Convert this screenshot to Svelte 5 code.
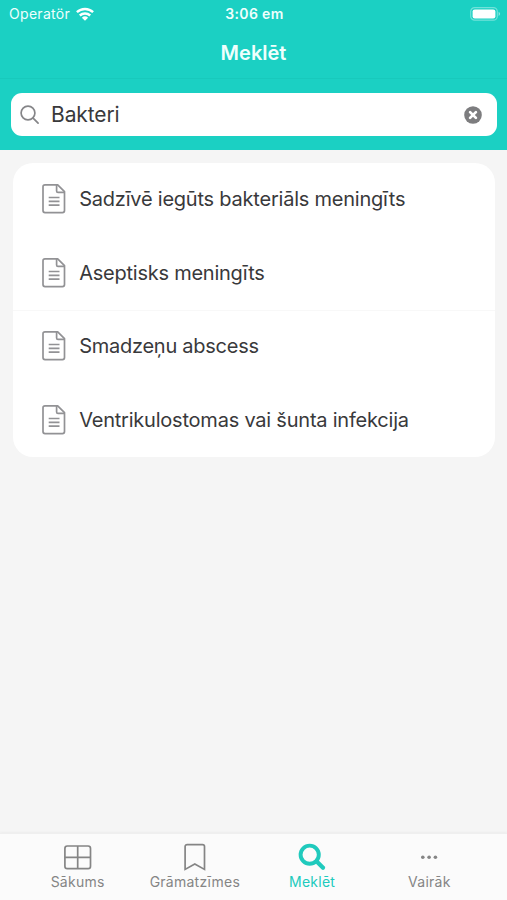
<script>
  const results = [
    { title: 'Sadzīvē iegūts bakteriāls meningīts', spacing: -0.22 },
    { title: 'Aseptisks meningīts', spacing: -0.24 },
    { title: 'Smadzeņu abscess', spacing: -0.26 },
    { title: 'Ventrikulostomas vai šunta infekcija', spacing: -0.22 }
  ];
  const tabs = [
    { id: 'home', label: 'Sākums' },
    { id: 'bookmarks', label: 'Grāmatzīmes' },
    { id: 'search', label: 'Meklēt' },
    { id: 'more', label: 'Vairāk' }
  ];
  const active = 'search';
</script>

<div class="screen">
  <header>
    <div class="status">
      <div class="carrier">
        <span>Operatör</span>
        <svg width="18" height="14" viewBox="0 0 18 14" fill="none" stroke="#fff" stroke-width="2.4">
          <path d="M.9 5.2a11.7 11.7 0 0 1 16.2 0" />
          <path d="M3.8 8.5a7.6 7.6 0 0 1 10.4 0" />
          <path d="M9 13.8 5.9 10.7a4.5 4.5 0 0 1 6.2 0z" fill="#fff" stroke="none" />
        </svg>
      </div>
      <span class="time">3:06 em</span>
      <svg class="battery" width="31" height="14" viewBox="0 0 31 14">
        <rect x="0.7" y="0.6" width="26.6" height="12.6" rx="4" fill="none" stroke="#fff" stroke-opacity=".38" stroke-width="1.2" />
        <rect x="2.6" y="2.4" width="22.8" height="9" rx="2.2" fill="#fff" />
        <path d="M28.6 4.8c2 .8 2 3.4 0 4.2z" fill="#fff" fill-opacity=".5" />
      </svg>
    </div>
    <h1>Meklēt</h1>
  </header>

  <div class="searchbar">
    <div class="field">
      <svg width="20" height="20" viewBox="0 0 20 20" fill="none" stroke="#858588" stroke-width="1.7" stroke-linecap="round">
        <circle cx="8" cy="8" r="6.9" />
        <path d="m13.1 13.1 5 5" />
      </svg>
      <span class="query">Bakteri</span>
      <svg width="18" height="18" viewBox="0 0 18 18">
        <circle cx="9" cy="9" r="8.8" fill="#7d7d7f" />
        <path d="m6.1 6.1 5.8 5.8m0-5.8-5.8 5.8" stroke="#fff" stroke-width="2.7" stroke-linecap="round" />
      </svg>
    </div>
  </div>

  <main>
    <ul>
      {#each results as result, i}
        <li class:divided={i === 2}>
          <svg width="24" height="30" viewBox="0 0 24 30" fill="none" stroke="#929295" stroke-width="1.7" stroke-linejoin="round">
            <path d="M3 .9h12.7L22.5 7.7v18.9a2 2 0 0 1-2 2H3a2 2 0 0 1-2-2V2.9a2 2 0 0 1 2-2z" />
            <path d="M14.6 1v6a1.4 1.4 0 0 0 1.4 1.4h6.5" />
            <path d="M6.7 13.5h10.8M6.7 17.4h10.8M6.7 21.2h10.8" />
          </svg>
          <span style="letter-spacing: {result.spacing}px">{result.title}</span>
        </li>
      {/each}
    </ul>
  </main>

  <nav>
    {#each tabs as tab}
      <div class="tab" class:active={tab.id === active}>
        <svg width="30" height="30" viewBox="0 0 30 30" fill="none" stroke="currentColor" stroke-width="1.7">
          {#if tab.id === 'home'}
            <rect x="1.9" y="4" width="25.6" height="22.6" rx="2.4" />
            <path d="M14.7 4v22.6M1.9 15.3h25.6" />
          {:else if tab.id === 'bookmarks'}
            <path d="M5.1 27.4V4.6a2 2 0 0 1 2-2h15.4a2 2 0 0 1 2 2v22.8L14.8 22z" />
          {:else if tab.id === 'search'}
            <circle cx="12.7" cy="12.7" r="9.1" stroke-width="3.9" />
            <path d="m19.5 19.3 6.5 6.5" stroke-width="4.3" stroke-linecap="round" />
          {:else}
            <g fill="currentColor" stroke="none">
              <circle cx="8.8" cy="15.3" r="1.8" />
              <circle cx="15.1" cy="15.3" r="1.8" />
              <circle cx="21.4" cy="15.3" r="1.8" />
            </g>
          {/if}
        </svg>
        <span>{tab.label}</span>
      </div>
    {/each}
  </nav>
</div>

<style>
  .screen {
    display: flex;
    flex-direction: column;
    width: 507px;
    height: 900px;
    overflow: hidden;
    background: #f5f5f5;
    font-family: Inter, "Liberation Sans", sans-serif;
    color: #39393b;
  }
  svg { display: block; flex: none; }
  header {
    box-sizing: border-box;
    height: 79px;
    background: #1bd0c3;
    color: #effffd;
    border-bottom: 1px solid #18c9bc;
  }
  .status {
    display: grid;
    grid-template-columns: 1fr auto 1fr;
    align-items: center;
    height: 27px;
    padding: 0 7px 0 9px;
    font-size: 14px;
    line-height: 17px;
  }
  .carrier { display: flex; align-items: center; gap: 6px; letter-spacing: 0.3px; }
  .time { font-weight: 600; letter-spacing: 0.35px; }
  .battery { justify-self: end; margin-right: -1px; }
  h1 {
    margin: 0;
    height: 52px;
    line-height: 52px;
    text-align: center;
    font-size: 20px;
    font-weight: 600;
    letter-spacing: 0;
  }
  .searchbar {
    box-sizing: border-box;
    height: 71px;
    padding: 14px 10px 0 11px;
    background: #1bd0c3;
  }
  .field {
    display: flex;
    align-items: center;
    box-sizing: border-box;
    height: 43px;
    padding: 0 15px 0 9px;
    border-radius: 11px;
    background: #fff;
  }
  .query { flex: 1; margin-left: 11px; font-size: 21px; letter-spacing: -0.1px; }
  main { flex: 1; padding: 12.5px 12px 0 13px; }
  ul {
    margin: 0;
    padding: 0;
    list-style: none;
    border-radius: 20px;
    background: #fff;
    overflow: hidden;
  }
  li {
    display: flex;
    align-items: center;
    gap: 13.5px;
    box-sizing: border-box;
    height: 73.5px;
    padding-left: 28.7px;
    font-size: 20px;
    white-space: nowrap;
  }
  li.divided { box-shadow: inset 0 1px #f8f8f8; }
  nav {
    display: flex;
    box-sizing: border-box;
    height: 67px;
    padding: 8px 19px 0;
    border-top: 1px solid #efefef;
    background: #fbfbfb;
    box-shadow: 0 -1px 2px rgba(0, 0, 0, 0.035);
  }
  .tab {
    display: flex;
    flex: 1;
    flex-direction: column;
    align-items: center;
    color: #858585;
    font-size: 14px;
    line-height: 18px;
    letter-spacing: 0.25px;
  }
  .tab span { margin-top: 1px; }
  .tab.active { color: #20cabd; }
</style>
